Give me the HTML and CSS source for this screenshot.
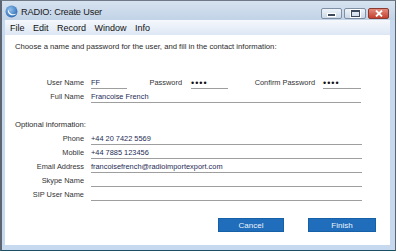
FILE: index.html
```html
<!DOCTYPE html>
<html lang="en">
<head>
  <meta charset="UTF-8" />
  <title>RADIO: Create User</title>
  <link rel="stylesheet" href="styles.css">
</head>
<body>

  <div class="window">

    <!-- Title bar -->
    <div class="titlebar">
      <svg class="app-icon" width="13" height="13" viewBox="0 0 13 13">
        <defs>
          <radialGradient id="ball" cx="0.4" cy="0.35" r="0.7">
            <stop offset="0" stop-color="#8fc0ee"/>
            <stop offset="1" stop-color="#2a69b0"/>
          </radialGradient>
        </defs>
        <circle cx="6.5" cy="6.5" r="6" fill="url(#ball)"/>
        <path d="M3 4.2 C2.2 7.5 4.6 10.6 8.4 10.2 C10 10 11 9.2 11.6 8.2 C9.8 9.6 6.2 9.6 4.6 7.4 C4 6.6 3.6 5.5 3 4.2 Z" fill="#ffffff"/>
      </svg>
      <span class="title">RADIO: Create User</span>
      <div class="caption-buttons">
        <span class="cap-btn"><i class="glyph-min"></i></span>
        <span class="cap-btn"><i class="glyph-max"></i></span>
        <span class="cap-btn close">
          <svg width="8" height="7" viewBox="0 0 8 7">
            <path d="M1 0.5 L7 6.5 M7 0.5 L1 6.5" stroke="#ffffff" stroke-width="1.8"/>
          </svg>
        </span>
      </div>
    </div>

    <div class="frame">
      <!-- Menu -->
      <ul class="menubar">
        <li>File</li>
        <li>Edit</li>
        <li>Record</li>
        <li>Window</li>
        <li>Info</li>
      </ul>

      <!-- Dialog content -->
      <div class="content">
        <p class="intro">Choose a name and password for the user, and fill in the contact information:</p>

        <div class="login-grid">
          <label>User Name</label>
          <span class="field">FF</span>
          <label>Password</label>
          <span class="field dots">&bull;&bull;&bull;&bull;</span>
          <label>Confirm Password</label>
          <span class="field dots">&bull;&bull;&bull;&bull;</span>
          <label>Full Name</label>
          <span class="field wide">Francoise French</span>
        </div>

        <p class="section">Optional information:</p>

        <div class="contact-grid">
          <label>Phone</label>
          <span class="field">+44 20 7422 5569</span>
          <label>Mobile</label>
          <span class="field">+44 7885 123456</span>
          <label>Email Address</label>
          <span class="field">francoisefrench@radioimportexport.com</span>
          <label>Skype Name</label>
          <span class="field"></span>
          <label>SIP User Name</label>
          <span class="field"></span>
        </div>

        <div class="actions">
          <button class="dialog-button cancel">Cancel</button>
          <button class="dialog-button finish">Finish</button>
        </div>
      </div>
    </div>

  </div>

</body>
</html>
```

FILE: styles.css
```css
body {
  margin: 0;
  font-family: 'Liberation Sans', Arial, sans-serif;
  background: #1b4f63;
}

.window {
  width: 396px;
  height: 251px;
  box-sizing: border-box;
  border-top: 1px solid #6f7a86;
  border-left: 2px solid #5d6670;
  border-right: 1px solid #5d6670;
  border-bottom: 1px solid #1b4f63;
  background: #c6d9ef;
  display: flex;
  flex-direction: column;
}

/* Title bar */
.titlebar {
  height: 19px;
  display: flex;
  align-items: center;
  padding: 0 6px 0 3px;
  background: linear-gradient(#d6e2ef, #c2d3e7);
}

.app-icon {
  margin-top: 2px;
  margin-right: 3px;
}

.title {
  font-size: 9.2px;
  color: #1a1a1a;
  margin-top: 3px;
  letter-spacing: -0.15px;
}

.caption-buttons {
  margin-left: auto;
  align-self: flex-start;
  margin-top: 7px;
  display: flex;
  gap: 2px;
}

.cap-btn {
  width: 21px;
  height: 11px;
  box-sizing: border-box;
  border: 1px solid #7f8fa4;
  border-radius: 2px;
  background: linear-gradient(#eef3f9, #cbd8e8);
  display: flex;
  align-items: center;
  justify-content: center;
}

.cap-btn:nth-child(2) {
  width: 22px;
}

.cap-btn.close {
  border-color: #8a3a30;
  background: linear-gradient(#e48a7c, #c3402f);
}

.glyph-min {
  width: 7px;
  height: 2px;
  margin-top: 3px;
  background: #3c4a5c;
  border: 1px solid #ffffff;
}

.glyph-max {
  width: 7px;
  height: 4px;
  border: 1px solid #3c4a5c;
  border-top-width: 2px;
  outline: 1px solid #ffffff;
}

/* Frame and menu */
.frame {
  flex: 1;
  display: flex;
  flex-direction: column;
  padding: 0 5px 5px 3px;
}

.menubar {
  list-style: none;
  margin: 0;
  height: 15px;
  padding: 0 0 0 5px;
  display: flex;
  align-items: center;
  gap: 8.5px;
  font-size: 9px;
  color: #111;
  background: linear-gradient(#f5f8fc, #dde7f4);
}

.content {
  flex: 1;
  background: #ffffff;
  padding: 7px 14px 0 10px;
  font-size: 7.4px;
  color: #2a2a2a;
}

.intro, .section {
  margin: 0;
  line-height: 10px;
  font-size: 7.7px;
}

.section {
  margin-top: 17px;
}

/* Form rows */
.login-grid, .contact-grid {
  display: grid;
  row-gap: 3px;
}

.login-grid {
  margin-top: 26px;
  grid-template-columns: 76px 36px 64px 37px 95px 38px;
}

.contact-grid {
  margin-top: 4px;
  grid-template-columns: 76px 271px;
}

label {
  line-height: 10px;
  text-align: right;
  padding-right: 7px;
  color: #333;
}

.login-grid label:nth-of-type(2) {
  padding-right: 9px;
}

.login-grid label:nth-of-type(3) {
  padding-right: 8px;
}

.field {
  height: 10px;
  line-height: 10px;
  border-bottom: 1px solid #9e9e9e;
  color: #1d2b55;
  white-space: nowrap;
}

.field.wide {
  grid-column: 2 / 7;
}

.dots {
  font-size: 9px;
  letter-spacing: 1px;
  color: #111;
}

/* Buttons */
.actions {
  margin-top: 17px;
  display: flex;
  justify-content: flex-end;
  gap: 24px;
}

.dialog-button {
  height: 14px;
  border: 1px solid #1660a8;
  background: #1f6dbb;
  color: #eef4fb;
  font-family: 'Liberation Sans', Arial, sans-serif;
  font-size: 8px;
  padding: 0;
}

.cancel {
  width: 66px;
}

.finish {
  width: 68px;
}
```
